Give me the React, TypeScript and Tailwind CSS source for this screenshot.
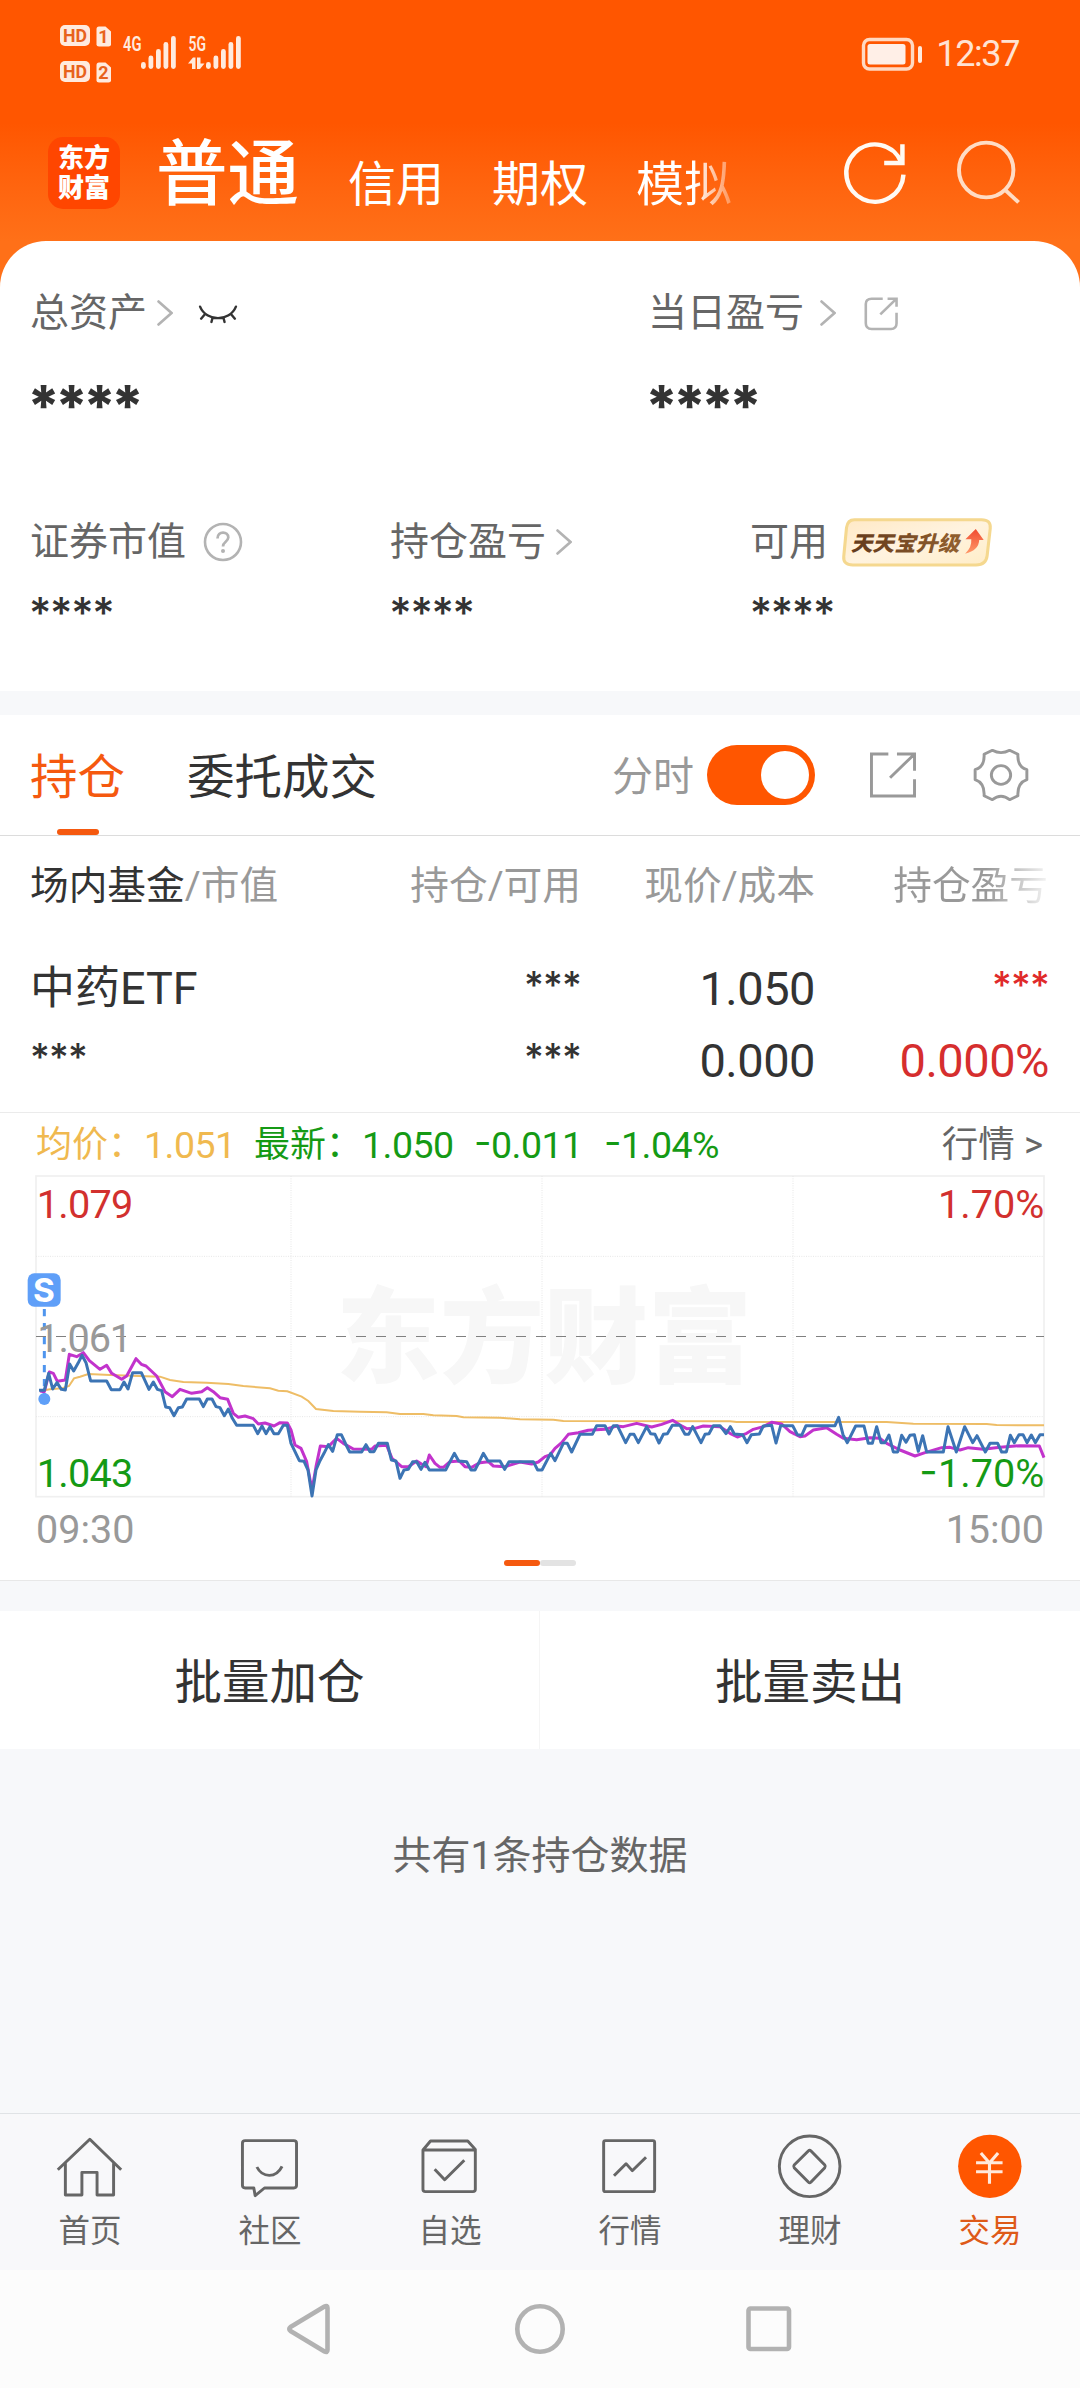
import React from "react";

const BASE_FONT = "font-[Roboto,'Noto_Sans_CJK_SC',sans-serif]";

function Stars({ className, children }: { className: string; children: string }) {
  return <span className={`font-[Inter,sans-serif] leading-none ${className}`}>{children}</span>;
}

function Chevron() {
  return (
    <svg width="16" height="26" viewBox="0 0 16 26" fill="none" stroke="#b3b3b3" strokeWidth="2.6" strokeLinecap="round">
      <path d="M1.5 1.5 L14.5 13 L1.5 24.5" />
    </svg>
  );
}

function Dash() {
  return <span className="relative -top-[3px] font-[Inter] text-[38px]">-</span>;
}

function StatusBar() {
  const bars = [7, 13.5, 20, 27, 33];
  return (
    <div className="flex h-[108px] items-start justify-between pt-[24px] pr-[60px] pl-[58px]">
      <svg width="190" height="64" viewBox="58 24 190 64" fill="#ffeade">
        {[25, 61].map((y, i) => (
          <g key={y}>
            <rect x="60" y={y} width="30" height="21" rx="5" />
            <text x="75" y={y + 17.2} fontSize="19" fontWeight="700" textAnchor="middle" fill="#e8621c" fontFamily="Roboto" textLength="24" lengthAdjust="spacingAndGlyphs">HD</text>
            <path d={`M99 ${y + 1.5} h6.500 l5.500 5 v13 q0 2 -2.500 2 h-9.500 q-2.500 0 -2.500 -2 v-15.500 q0 -2.500 2.500 -2.500z`} />
            <text x="103.500" y={y + 18} fontSize="18" fontWeight="700" textAnchor="middle" fill="#e8621c" fontFamily="Roboto">{i + 1}</text>
          </g>
        ))}
        <text x="123" y="51" fontSize="21" fontWeight="600" fontFamily="Roboto" textLength="18.500" lengthAdjust="spacingAndGlyphs">4G</text>
        <text x="188.500" y="51" fontSize="21" fontWeight="600" fontFamily="Roboto" textLength="17.500" lengthAdjust="spacingAndGlyphs">5G</text>
        {bars.map((h, i) => (
          <g key={h}>
            <rect x={141 + i * 7.5} y={69 - h} width="4.800" height={h} rx="2.400" />
            <rect x={206 + i * 7.5} y={69 - h} width="4.800" height={h} rx="2.400" />
          </g>
        ))}
        <path d="M188 63.500 L193 57.500 H195.500 V69 H192 V63.500Z M197 57.500 H200.500 V63.500 H204.500 L200 69 H197Z" />
      </svg>
      <div className="mt-[12px] flex items-center">
        <svg width="62" height="36" viewBox="0 0 62 36" fill="none">
          <rect x="2.500" y="3.500" width="49" height="29.500" rx="6" stroke="#ffd9c2" strokeWidth="3.400" />
          <rect x="6.500" y="8" width="38" height="20.500" rx="2.500" fill="#ffefe7" />
          <rect x="57" y="10" width="4" height="17" rx="2" fill="#ffeade" />
        </svg>
        <span className="mr-[1px] ml-[13px] font-[Roboto] text-[36px] leading-[36px] tracking-[-1.400px] text-[#ffe3d3]">12:37</span>
      </div>
    </div>
  );
}

function Header() {
  return (
    <div className="flex h-[142px] items-start text-white">
      <div className="mt-[29px] ml-[48px] flex h-[72px] w-[72px] items-center justify-center rounded-[15px] bg-[#ff4600]">
        <span className="w-[52px] text-[26px] leading-[30px] font-black break-all">东方财富</span>
      </div>
      <span className="mt-[22px] ml-[36px] text-[71.500px] leading-[90px] font-medium whitespace-nowrap">普通</span>
      <div className="mt-[47px] ml-[49px] flex gap-[48px] text-[48px] leading-[60px] whitespace-nowrap">
        <span>信用</span>
        <span>期权</span>
        <span className="bg-linear-to-r from-white from-60% to-white/30 bg-clip-text text-transparent">模拟</span>
      </div>
      <svg className="mt-[28px] ml-[105px]" width="76" height="76" viewBox="865 409 220.7 228" preserveAspectRatio="none" fill="none" stroke="#fffaf3" strokeWidth="13">
        <path d="M1058 525 A83 86 0 1 1 1052 488" />
        <path d="M1055 434 V490 H1002" />
      </svg>
      <svg className="mt-[24px] ml-[36px]" width="76" height="76" viewBox="1190 396 220.7 228" preserveAspectRatio="none" fill="none" stroke="#ffdcc4" strokeWidth="11.500">
        <ellipse cx="1298" cy="510" rx="79" ry="82" />
        <path d="M1352 569 L1392 607" />
      </svg>
    </div>
  );
}

function Summary() {
  return (
    <div className="relative -mt-[9px] h-[450px] rounded-t-[46px] bg-white pt-[46px] text-[39px] text-[#666]">
      <div className="flex h-[52px] items-center pl-[30px]">
        <div className="flex w-[618px] items-center">
          <span>总资产</span>
          <span className="ml-[10px]"><Chevron /></span>
          <svg className="mt-[3px] ml-[25px]" width="40" height="21.300" viewBox="578 132 116 64" preserveAspectRatio="none" fill="none" stroke="#333" strokeWidth="7" strokeLinecap="round">
            <path d="M584 140 C602 186 670 186 688 140 M598 163 L587 176 M620 174 L617 186 M652 174 L655 186 M674 163 L685 176" />
          </svg>
        </div>
        <span>当日盈亏</span>
        <span className="ml-[16px]"><Chevron /></span>
        <svg className="ml-[26px]" width="38" height="36.700" viewBox="938 103 110 110" preserveAspectRatio="none" fill="none" stroke="#b3b3b3" strokeWidth="7.500">
          <path d="M998 114 H966 Q949 114 949 130 V188 Q949 205 966 205 H1022 Q1038 205 1038 188 V156 M1012 114 H1038 V138 M1038 114 L991 161" />
        </svg>
      </div>
      <div className="mt-[38px] flex h-[56px] items-center pl-[27px] text-[57px] font-extrabold tracking-[-5.200px] text-[#333]">
        <Stars className="w-[618px]">****</Stars>
        <Stars className="">****</Stars>
      </div>
      <div className="mt-[83px] grid h-[52px] grid-cols-3 items-center pl-[30px] leading-[52px]">
        <div className="flex items-center">
          <span>证券市值</span>
          <svg className="ml-[17px]" width="40" height="40" viewBox="0 0 40 40" fill="none" stroke="#b3b3b3">
            <circle cx="20" cy="20" r="18" strokeWidth="2.600" />
            <path d="M14.500 16.500 C14.500 8.500 25.500 9 25.300 15.500 C25 20 20 19.500 20 24.500" strokeWidth="2.700" />
            <circle cx="20" cy="29" r="2" fill="#b3b3b3" stroke="none" />
          </svg>
        </div>
        <div className="flex items-center pl-[10px]">
          <span>持仓盈亏</span>
          <span className="ml-[10px]"><Chevron /></span>
        </div>
        <div className="flex items-center pl-[20px]">
          <span>可用</span>
          <svg className="ml-[13px]" width="152" height="52.300" viewBox="876 767 441 157" preserveAspectRatio="none">
            <defs>
              <linearGradient id="gold" x1="0" x2="1" y1="0" y2="1">
                <stop offset="0" stopColor="#ffe9c6" />
                <stop offset="0.500" stopColor="#fff3df" />
                <stop offset="1" stopColor="#ffedc8" />
              </linearGradient>
              <linearGradient id="brown">
                <stop offset="0" stopColor="#633a1c" />
                <stop offset="1" stopColor="#92602f" />
              </linearGradient>
              <linearGradient id="arrow" x1="0" x2="0" y1="0" y2="1">
                <stop offset="0" stopColor="#f04a30" />
                <stop offset="1" stopColor="#ff9a6a" />
              </linearGradient>
            </defs>
            <path d="M915 778 H1284 Q1311 778 1309 804 L1300 886 Q1297 914 1268 914 H910 Q882 914 884 888 L892 802 Q895 778 915 778Z" fill="url(#gold)" stroke="#f5d88f" strokeWidth="9" />
            <text x="904" y="871" fontSize="63" fontWeight="800" fontStyle="italic" fill="url(#brown)" fontFamily="Noto Sans CJK SC">天天宝升级</text>
            <path d="M1267 806 L1290 839 H1277 Q1276 870 1236 880 Q1256 862 1254 837 H1237Z" fill="url(#arrow)" />
          </svg>
        </div>
      </div>
      <div className="mt-[23px] grid h-[40px] grid-cols-3 items-center pl-[29px] text-[43px] font-medium tracking-[-1.300px] text-[#333]">
        <Stars className="">****</Stars>
        <Stars className="pl-[10px]">****</Stars>
        <Stars className="pl-[20px]">****</Stars>
      </div>
    </div>
  );
}

function HoldingTabs() {
  return (
    <div className="flex h-[121px] items-center border-b border-[#dcdcdc] bg-white pl-[30px] text-[47.500px]">
      <div className="relative flex h-full items-center pt-[7px] text-[#f5590f]">
        <span>持仓</span>
        <span className="absolute bottom-0 left-[27px] h-[6px] w-[42px] rounded-full bg-[#f5590f]" />
      </div>
      <span className="ml-[62px] pt-[7px] text-[#333]">委托成交</span>
      <span className="ml-[235px] pt-[6px] text-[41px] text-[#999]">分时</span>
      <div className="ml-[13px] flex h-[60px] w-[108px] items-center justify-end rounded-full bg-[#ff5600] pr-[6px]">
        <div className="h-[48px] w-[48px] rounded-full bg-white" />
      </div>
      <svg className="ml-[52px]" width="52" height="50.300" viewBox="953 180 151 151" preserveAspectRatio="none" fill="none" stroke="#999" strokeWidth="8.500">
        <path d="M1015 192 H966 V318 H1091 V268 M1040 192 H1091 V242 M1089 194 L1020 263" />
      </svg>
      <svg className="ml-[52px]" width="60" height="58" viewBox="1254 169 174 174" preserveAspectRatio="none" fill="none" stroke="#999" strokeWidth="8.500">
        <path d="M1316 182 Q1341 196 1366 182 L1390 194 Q1388 232 1416 240 V270 Q1388 280 1390 318 L1366 330 Q1341 309 1316 330 L1292 318 Q1294 280 1266 270 V240 Q1294 232 1292 194Z" strokeLinejoin="round" />
        <circle cx="1341" cy="256" r="28" />
      </svg>
    </div>
  );
}

function HoldingTable() {
  return (
    <div className="h-[277px] border-b border-[#ebebeb] bg-white text-[#333]">
      <div className="grid h-[100px] grid-cols-[280px_271px_234px_233px] items-center pl-[30px] text-right text-[38.700px] whitespace-nowrap text-[#999]">
        <span className="text-left"><span className="text-[#333]">场内基金</span>/市值</span>
        <span>持仓/可用</span>
        <span>现价/成本</span>
        <span><span className="bg-linear-to-r from-[#999] from-60% to-[#f4f4f4] bg-clip-text text-transparent">持仓盈亏</span></span>
      </div>
      <div className="mt-[17px] grid h-[72px] grid-cols-[280px_271px_234px_234px] items-center pl-[30px] text-right text-[47px]">
        <span className="text-left text-[45px]">中药ETF</span>
        <Stars className="pb-[8px] text-[38px] font-medium tracking-[-0.800px]">***</Stars>
        <span className="tracking-[-0.500px]">1.050</span>
        <Stars className="pb-[8px] text-[38px] font-medium tracking-[-0.800px] text-[#e02a2a]">***</Stars>
      </div>
      <div className="grid h-[72px] grid-cols-[280px_271px_234px_234px] items-center pl-[30px] text-right text-[47px]">
        <Stars className="pb-[8px] text-left text-[38px] font-medium tracking-[-0.800px]">***</Stars>
        <Stars className="pb-[8px] text-[38px] font-medium tracking-[-0.800px]">***</Stars>
        <span className="tracking-[-0.500px]">0.000</span>
        <span className="tracking-[-0.500px] text-[#d62e2e]">0.000%</span>
      </div>
    </div>
  );
}

const PRICE =
  "117,901 133,901 146,850 158,897 171,878 184,898 196,900 209,822 221,843 234,820 246,796 258,818 272,873 320,873 334,899 360,899 372,876 384,897 398,848 424,848 447,898 460,876 472,898 485,902 497,951 509,953 522,977 535,953 547,951 560,927 598,927 610,950 622,927 636,927 648,950 660,953 673,977 685,957 697,985 710,1006 760,1006 773,1031 786,1008 798,1031 810,1010 822,1031 835,1031 850,1006 862,1006 873,1060 885,1085 898,1112 912,1114 924,1140 936,1218 948,1140 960,1112 972,1090 985,1064 998,1084 1012,1034 1024,1034 1037,1062 1049,1086 1085,1086 1098,1064 1110,1085 1122,1085 1135,1060 1162,1060 1174,1110 1188,1113 1200,1165 1212,1140 1225,1138 1238,1115 1250,1115 1263,1138 1275,1117 1288,1140 1337,1140 1363,1090 1376,1113 1400,1115 1413,1140 1425,1140 1438,1115 1450,1090 1464,1113 1500,1113 1514,1138 1527,1115 1600,1115 1613,1140 1626,1140 1652,1090 1665,1112 1690,1060 1702,1060 1715,1086 1740,1033 1777,1033 1790,1007 1815,1007 1827,1032 1840,1007 1852,1007 1877,1058 1890,1033 1902,1033 1915,1058 1940,1010 1952,1031 1965,1033 1977,1059 1990,1033 2002,1031 2017,1006 2040,1006 2055,1033 2066,1033 2078,1010 2103,1058 2115,1033 2127,1031 2140,1007 2160,1007 2178,1031 2191,1010 2203,1032 2228,1034 2241,1058 2254,1034 2278,1032 2290,1008 2315,1006 2328,1059 2342,1007 2378,1007 2392,1034 2405,1036 2418,1007 2505,1007 2516,982 2529,1034 2542,1058 2567,1008 2592,1008 2605,1060 2617,1060 2630,1010 2643,1058 2655,1058 2667,1035 2680,1086 2693,1086 2705,1036 2718,1057 2730,1036 2743,1034 2755,1084 2768,1037 2780,1086 2830,1086 2844,1010 2869,1086 2894,1010 2918,1058 2931,1037 2956,1086 2970,1060 2993,1060 3005,1086 3019,1086 3031,1036 3043,1058 3057,1034 3069,1034 3081,1058 3094,1035 3106,1058 3120,1034 3132,1034";
const INDEX =
  "120,903 133,905 148,846 160,850 172,874 196,870 208,793 230,800 250,788 268,812 300,838 320,826 335,850 365,868 380,858 408,806 424,823 438,828 470,858 495,905 517,920 540,898 575,910 605,905 622,893 640,905 660,923 683,928 700,970 715,982 735,978 760,986 775,1002 795,999 822,1008 840,998 862,999 873,1020 885,1065 903,1075 920,1115 936,1200 948,1130 961,1068 985,1070 1010,1045 1030,1060 1060,1077 1115,1078 1125,1068 1160,1066 1176,1105 1205,1130 1225,1130 1250,1113 1278,1130 1288,1095 1305,1120 1320,1132 1330,1132 1350,1115 1378,1113 1395,1130 1415,1132 1440,1118 1465,1115 1480,1128 1515,1130 1560,1116 1595,1122 1615,1116 1635,1100 1650,1095 1665,1075 1685,1058 1705,1033 1735,1028 1765,1021 1815,1018 1850,1008 1870,1010 1910,1000 1955,1011 1985,1003 2018,991 2040,1005 2060,1016 2085,1015 2110,1008 2160,1010 2190,1030 2212,1041 2240,1030 2260,1018 2290,1010 2315,997 2345,1002 2370,1025 2400,1040 2415,1038 2440,1020 2480,1013 2510,1033 2530,1045 2570,1049 2610,1043 2640,1045 2660,1060 2700,1080 2745,1098 2775,1088 2825,1073 2850,1072 2880,1080 2905,1073 2950,1078 3000,1072 3060,1067 3118,1068 3132,1103";
const AVERAGE =
  "120,903 150,898 185,895 207,888 222,865 240,860 265,852 330,855 480,860 510,870 550,876 620,878 685,882 730,888 810,895 835,902 862,904 905,920 925,933 948,957 1000,963 1080,965 1160,967 1200,972 1270,972 1300,976 1370,978 1390,982 1500,983 1560,988 1660,989 1690,993 2190,994 2210,996 2660,996 2740,1001 2960,1002 2990,1005 3132,1006";

function Chart() {
  return (
    <svg className="block" width="1080" height="336" viewBox="0 246 3240 1008" fill="none" fontFamily="Roboto">
      <text x="1008" y="856" fontSize="312" fontWeight="900" fill="#f7f7f7" fontFamily="Noto Sans CJK SC">东方财富</text>
      <rect x="108" y="258" width="3024" height="962" stroke="#f0f0f0" strokeWidth="5" />
      <path d="M873 258 V1220 M1626 258 V1220 M2379 258 V1220 M108 499 H3132 M108 980 H3132" stroke="#e6e6e6" strokeWidth="3" strokeDasharray="3 4" />
      <path d="M108 739.500 H3132" stroke="#808080" strokeWidth="3" strokeDasharray="30 30" />
      <path d="M133 657 V915" stroke="#4f95ee" strokeWidth="9" strokeDasharray="22 20" />
      <text x="112" y="787" fontSize="119" fill="#999" textLength="284">1.061</text>
      <polyline points={AVERAGE} stroke="#eebd66" strokeWidth="6" />
      <polyline points={INDEX} stroke="#c233cc" strokeWidth="9" strokeLinejoin="round" />
      <polyline points={PRICE} stroke="#3c74b4" strokeWidth="9" strokeLinejoin="round" />
      <circle cx="133" cy="927" r="18" fill="#5f9ff8" />
      <rect x="83" y="550" width="99" height="100" rx="20" fill="#5f9ff8" />
      <text x="132" y="637" fontSize="100" fontWeight="700" fill="#fff" textAnchor="middle" fontFamily="Inter">S</text>
      <text x="110" y="384" fontSize="119" fill="#d2302e" textLength="290">1.079</text>
      <text x="110" y="1191" fontSize="119" fill="#159a15" textLength="290">1.043</text>
      <text x="3133" y="384" fontSize="119" fill="#d2302e" textAnchor="end">1.70%</text>
      <text x="3133" y="1191" fontSize="119" fill="#159a15" textAnchor="end">1.70%</text>
      <text x="2758" y="1186" fontSize="120" fill="#159a15" fontFamily="Inter">-</text>
    </svg>
  );
}

function ChartPanel() {
  return (
    <div className="h-[468px] border-b border-[#e8e8e8] bg-white">
      <div className="flex h-[59px] items-center pt-[5px] pl-[36px] text-[36px] whitespace-nowrap text-[#159a15]">
        <span className="w-[108px] text-[#f0b94f]">均价：</span>
        <span className="w-[110px] text-[37.500px] tracking-[-0.500px] text-[#f0b94f]">1.051</span>
        <span className="w-[108px]">最新：</span>
        <span className="w-[112px] text-[37.500px] tracking-[-0.500px]">1.050</span>
        <span className="w-[130px] text-[37.500px] tracking-[-0.500px]"><Dash />0.011</span>
        <span className="text-[37.500px] tracking-[-0.500px]"><Dash />1.04%</span>
        <span className="mr-[37px] ml-auto text-[36.500px] text-[#666]">行情 &gt;</span>
      </div>
      <Chart />
      <div className="flex h-[38px] items-center justify-between px-[36px] pt-[6px] text-[39.500px] leading-none text-[#999]">
        <span>09:30</span>
        <span>15:00</span>
      </div>
      <div className="mt-[14px] flex justify-center">
        <span className="h-[6px] w-[36px] rounded-full bg-[#f5590f]" />
        <span className="h-[6px] w-[36px] rounded-full bg-[#e3e3e3]" />
      </div>
    </div>
  );
}

const TABS: { label: string; view: string; icon: React.ReactNode }[] = [
  { label: "首页", view: "157 90 209 216", icon: <path d="M168 209 L261 118 L352 209 M190 190 V285 H238 V217 H282 V285 H330 V190" /> },
  { label: "社区", view: "679.5 90 209 216", icon: <path d="M712 122 H853 Q861 122 861 130 V256 Q861 264 853 264 H768 L741 287 L737 264 H712 Q704 264 704 256 V130 Q704 122 712 122Z M746 201 Q758 226 782 226 Q806 226 819 199" /> },
  { label: "自选", view: "1202 90 209 216", icon: <path d="M1228 150 L1250 123 H1358 L1380 148 V268 Q1380 275 1373 275 H1235 Q1228 275 1228 268Z M1228 150 H1380 M1262 208 L1291 239 L1348 181" /> },
  { label: "行情", view: "157 90 209 216", icon: <path d="M190 122 H328 Q333 122 333 128 V269 Q333 275 328 275 H190 Q185 275 185 269 V128 Q185 122 190 122Z M215 227 L250 191 L268 212 L308 172" /> },
  { label: "理财", view: "679.5 90 209 216", icon: <><ellipse cx="783" cy="199" rx="88" ry="91" /><path d="M779 153 Q783 149 787 153 L827 195 Q830 199 827 203 L787 246 Q783 250 779 246 L738 203 Q735 199 738 195Z" /></> },
  { label: "交易", view: "1202 90 209 216", icon: <><ellipse cx="1306" cy="199" rx="92" ry="95" fill="#ff5600" stroke="none" /><path d="M1280 159 L1305 189 L1330 159 M1305 189 V251 M1266 188 H1343 M1266 215 H1343" stroke="#ffe9dc" strokeWidth="9" /></> },
];

function BottomTabs() {
  return (
    <div className="grid h-[157px] grid-cols-6 border-t border-[#e0e3e6] bg-[#f8f8fa]">
      {TABS.map((t) => (
        <div key={t.label} className={`flex flex-col items-center pt-[16px] text-[31.500px] leading-[44px] ${t.label === "交易" ? "text-[#de5a18]" : "text-[#666]"}`}>
          <svg width="72" height="72" viewBox={t.view} preserveAspectRatio="none" fill="none" stroke="#666" strokeWidth="8.500" strokeLinejoin="round">{t.icon}</svg>
          <span className="mt-[8px]">{t.label}</span>
        </div>
      ))}
    </div>
  );
}

function SystemNav() {
  return (
    <div className="flex h-[118px] items-center bg-[#fcfcfc] pl-[281px]">
      <svg width="54" height="60" viewBox="0 0 54 60" fill="none" stroke="#b2b2b2" strokeWidth="4.600" strokeLinejoin="round">
        <path d="M43.500 7.500 Q46.500 6 46.500 9 V51 Q46.500 54 43.500 52.500 L9.500 32 Q7 30 9.500 28Z" />
      </svg>
      <svg className="ml-[175px]" width="60" height="60" viewBox="0 0 60 60" fill="none" stroke="#b2b2b2" strokeWidth="4.600">
        <circle cx="30" cy="30" r="22.700" />
      </svg>
      <svg className="ml-[169px]" width="60" height="60" viewBox="0 0 60 60" fill="none" stroke="#b2b2b2" strokeWidth="4.600">
        <rect x="9.500" y="9.500" width="40.500" height="40.500" rx="2" />
      </svg>
    </div>
  );
}

export default function App() {
  return (
    <div className={`flex h-[2388px] w-[1080px] flex-col overflow-hidden bg-[#f7f8fa] ${BASE_FONT}`}>
      <div className="bg-linear-to-b from-[#ff5600] from-[123px] to-[#ff7018] to-[241px]">
        <StatusBar />
        <Header />
        <Summary />
      </div>
      <div className="mt-[24px]">
        <HoldingTabs />
        <HoldingTable />
        <ChartPanel />
      </div>
      <div className="mt-[30px] grid h-[138px] grid-cols-2 bg-white text-[47.500px] text-[#333]">
        <div className="flex items-center justify-center border-r border-[#f5f5f5] pt-[7px]">批量加仓</div>
        <div className="flex items-center justify-center pt-[7px]">批量卖出</div>
      </div>
      <div className="mt-[79px] text-center text-[39px] leading-[56px] text-[#666]">共有1条持仓数据</div>
      <div className="mt-auto">
        <BottomTabs />
        <SystemNav />
      </div>
    </div>
  );
}
